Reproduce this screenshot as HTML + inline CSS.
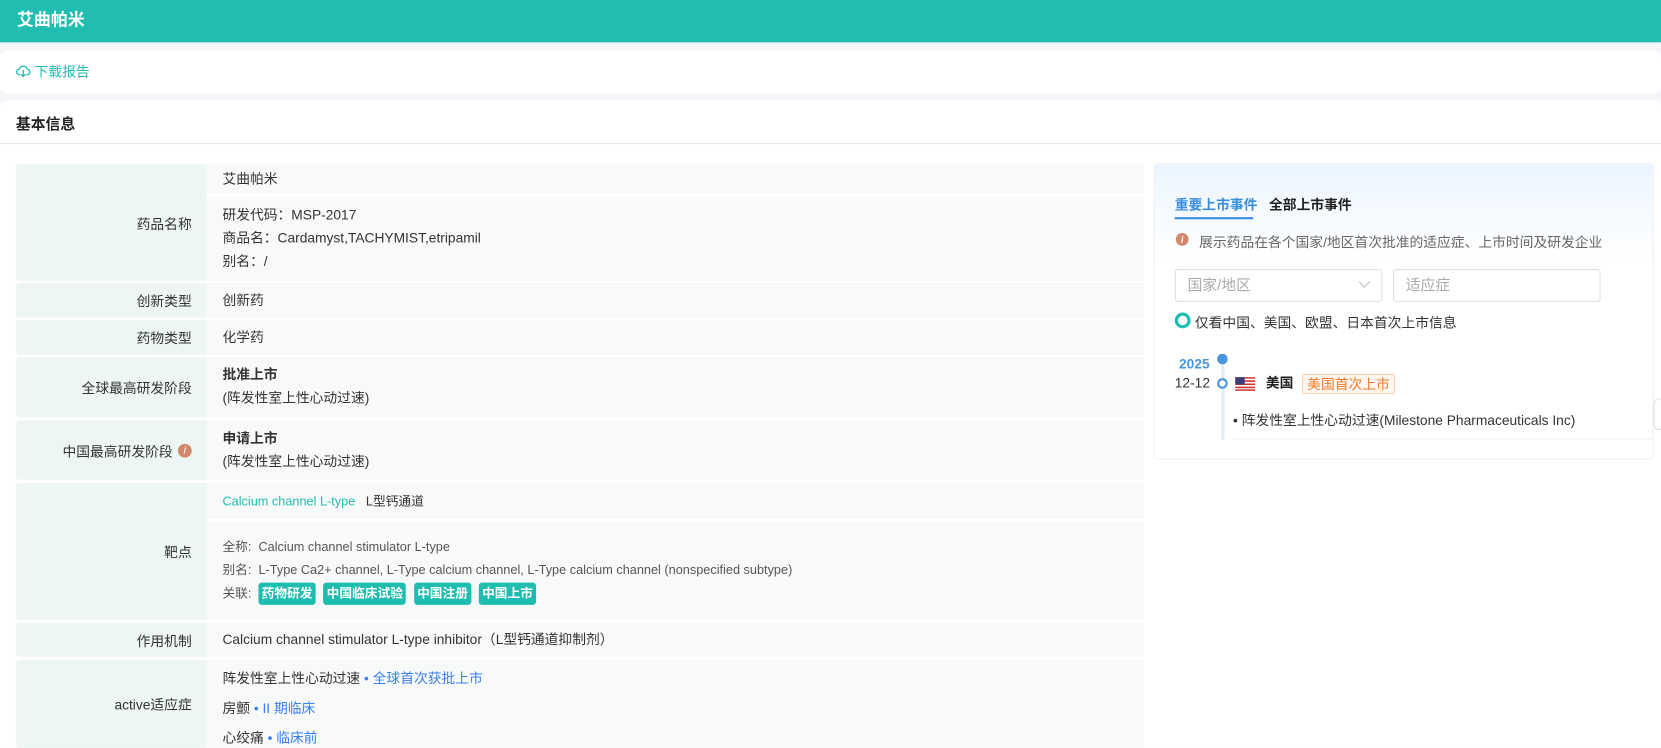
<!DOCTYPE html>
<html style="overflow:hidden;height:748px;width:1661px"><head><meta charset="utf-8"><style>
*{margin:0;padding:0;box-sizing:border-box}
body{width:1661px;height:748px;overflow:hidden;background:#f5f6f9;font-family:"Liberation Sans","Noto Sans CJK SC",sans-serif;font-size:13px;color:#333;position:relative}
#w{position:absolute;left:0;top:0;width:1568px;height:706px;transform:scale(1.0593);transform-origin:0 0}
.a{position:absolute}
.lab{position:absolute;left:15px;width:180px;background:#eef6f5;text-align:right;padding-right:14px;display:flex;align-items:center;justify-content:flex-end;color:#333;border-radius:3px 0 0 3px}
.val{position:absolute;left:195px;width:885px;background:#f8fafa;padding-left:15px}
.tag{display:inline-block;background:#1fbdb0;color:#fff;font-weight:bold;border-radius:3px;padding:0 3px;height:21px;line-height:21px;margin-right:4px}
.bl{color:#3a7ef0}
</style></head><body><div id="w">
<div class="a" style="left:0;top:0;width:1568px;height:40px;background:#20bdb0;color:#fff;font-weight:bold;font-size:16px;line-height:40px;padding-left:16px">艾曲帕米</div>
<div class="a" style="left:0;top:48px;width:1568px;height:40px;background:#fff;border-radius:6px;color:#20bdb0;line-height:40px;padding-left:15px">
<svg width="14" height="14" viewBox="0 0 16 16" style="vertical-align:-2px" fill="none" stroke="#20bdb0" stroke-width="1.4"><path d="M4.5 12H4a3 3 0 0 1-.3-6A4.5 4.5 0 0 1 12.3 6 3 3 0 0 1 12 12h-.5"/><path d="M8 7v7M5.5 11.5 8 14l2.5-2.5"/></svg> 下载报告</div>
<div class="a" style="left:0;top:95px;width:1568px;height:611px;background:#fff;border-radius:6px 6px 0 0"></div>
<div class="a" style="left:15px;top:107px;font-weight:bold;font-size:14px;color:#222">基本信息</div>
<div class="a" style="left:0;top:135px;width:1568px;height:1px;background:#e6e6e6"></div>

<div class="lab" style="top:155px;height:110px">药品名称</div>
<div class="val" style="top:155px;height:28px;line-height:28px">艾曲帕米</div>
<div class="val" style="top:186px;height:79px;padding-top:6px;line-height:22px">研发代码：MSP-2017<br>商品名：Cardamyst,TACHYMIST,etripamil<br>别名：/</div>

<div class="lab" style="top:267px;height:33px">创新类型</div>
<div class="val" style="top:267px;height:33px;line-height:33px">创新药</div>
<div class="lab" style="top:302px;height:33px">药物类型</div>
<div class="val" style="top:302px;height:33px;line-height:33px">化学药</div>
<div class="lab" style="top:337px;height:57px">全球最高研发阶段</div>
<div class="val" style="top:337px;height:57px;padding-top:6px;line-height:22px"><b>批准上市</b><br>(阵发性室上性心动过速)</div>
<div class="lab" style="top:397px;height:56px">中国最高研发阶段 <span style="display:inline-block;width:13px;height:13px;border-radius:50%;background:#d2866a;color:#fff;font-size:10px;line-height:13px;text-align:center;font-style:italic;margin-left:5px">i</span></div>
<div class="val" style="top:397px;height:56px;padding-top:6px;line-height:22px"><b>申请上市</b><br>(阵发性室上性心动过速)</div>
<div class="lab" style="top:456px;height:129px">靶点</div>
<div class="val" style="top:456px;height:34px;line-height:34px;font-size:12px"><span style="color:#20bdb0">Calcium channel L-type</span>&nbsp;&nbsp; L型钙通道</div>
<div class="val" style="top:493px;height:92px;padding-top:12px;line-height:22px;font-size:12px;color:#555">全称:&nbsp; Calcium channel stimulator L-type<br>别名:&nbsp; L-Type Ca2+ channel, L-Type calcium channel, L-Type calcium channel (nonspecified subtype)<br>关联:&nbsp; <span class="tag">药物研发</span> <span class="tag">中国临床试验</span> <span class="tag">中国注册</span> <span class="tag">中国上市</span></div>
<div class="lab" style="top:588px;height:32px">作用机制</div>
<div class="val" style="top:588px;height:32px;line-height:32px">Calcium channel stimulator L-type inhibitor（L型钙通道抑制剂）</div>
<div class="lab" style="top:623px;height:83px">active适应症</div>
<div class="val" style="top:623px;height:83px;padding-top:4px;line-height:28px">阵发性室上性心动过速<span class="bl"> • 全球首次获批上市</span><br>房颤<span class="bl"> • II 期临床</span><br>心绞痛<span class="bl"> • 临床前</span></div>

<div class="a" style="left:1089px;top:154px;width:472px;height:280px;border:1px solid #eef0f3;border-radius:4px;background:linear-gradient(#ebf5fe,#fff 90px)"></div>
<div class="a" style="left:1109px;top:183px;font-weight:bold;color:#3a8ee0">重要上市事件</div>
<div class="a" style="left:1109px;top:205px;width:74px;height:2px;background:#3a8ee0"></div>
<div class="a" style="left:1198px;top:183px;font-weight:bold;color:#222">全部上市事件</div>
<div class="a" style="left:1110px;top:220px;width:12px;height:12px;border-radius:50%;background:#d2866a;color:#fff;font-size:9px;line-height:12px;text-align:center;font-style:italic;font-weight:bold">i</div>
<div class="a" style="left:1132px;top:218px;color:#666">展示药品在各个国家/地区首次批准的适应症、上市时间及研发企业</div>
<div class="a" style="left:1109px;top:254px;width:196px;height:31px;border:1px solid #dcdfe6;border-radius:3px;background:#fff;color:#aaa;font-size:14px;line-height:29px;padding-left:11px">国家/地区<svg class="a" style="left:172px;top:10px" width="12" height="8" viewBox="0 0 12 8" fill="none" stroke="#bbb"><path d="M1 1l5 5 5-5"/></svg></div>
<div class="a" style="left:1315px;top:254px;width:196px;height:31px;border:1px solid #dcdfe6;border-radius:3px;background:#fff;color:#aaa;font-size:14px;line-height:29px;padding-left:11px">适应症</div>
<div class="a" style="left:1109px;top:295px;width:15px;height:15px;border:3px solid #20bdb0;border-radius:50%"></div>
<div class="a" style="left:1128px;top:294px;color:#333">仅看中国、美国、欧盟、日本首次上市信息</div>
<div class="a" style="left:1153px;top:340px;width:3px;height:75px;background:#e3ebf5"></div>
<div class="a" style="left:1149px;top:334px;width:10px;height:10px;border-radius:50%;background:#4a95e0"></div>
<div class="a" style="left:1113px;top:336px;color:#4a95e0;font-weight:bold">2025</div>
<div class="a" style="left:1109px;top:354px;color:#333;line-height:16px">12-12</div>
<div class="a" style="left:1149px;top:357px;width:10px;height:10px;border-radius:50%;border:2px solid #4a95e0;background:#fff"></div>
<svg class="a" style="left:1166px;top:356px" width="19" height="13" viewBox="0 0 19 13"><rect width="19" height="13" fill="#fff"/><g fill="#c33"><rect y="0" width="19" height="1.5"/><rect y="3" width="19" height="1.5"/><rect y="6" width="19" height="1.5"/><rect y="9" width="19" height="1.5"/><rect y="11.5" width="19" height="1.5"/></g><rect width="9" height="7" fill="#3b3b7a"/></svg>
<div class="a" style="left:1195px;top:354px;font-weight:bold;color:#222;line-height:16px">美国</div>
<div class="a" style="left:1229px;top:353px;height:19px;line-height:17px;border:1px solid #fcd3b7;background:#fff6f0;color:#f07a2a;padding:0 4px;border-radius:2px">美国首次上市</div>
<div class="a" style="left:1164px;top:386px;color:#333">• 阵发性室上性心动过速(Milestone Pharmaceuticals Inc)</div>
<div class="a" style="left:1164px;top:414px;width:396px;height:1px;background:#eef0f3"></div>
<div class="a" style="left:1561px;top:376px;width:7px;height:30px;border:1px solid #ddd;border-right:none;border-radius:5px 0 0 5px;background:#fff"></div>
</div></body></html>
